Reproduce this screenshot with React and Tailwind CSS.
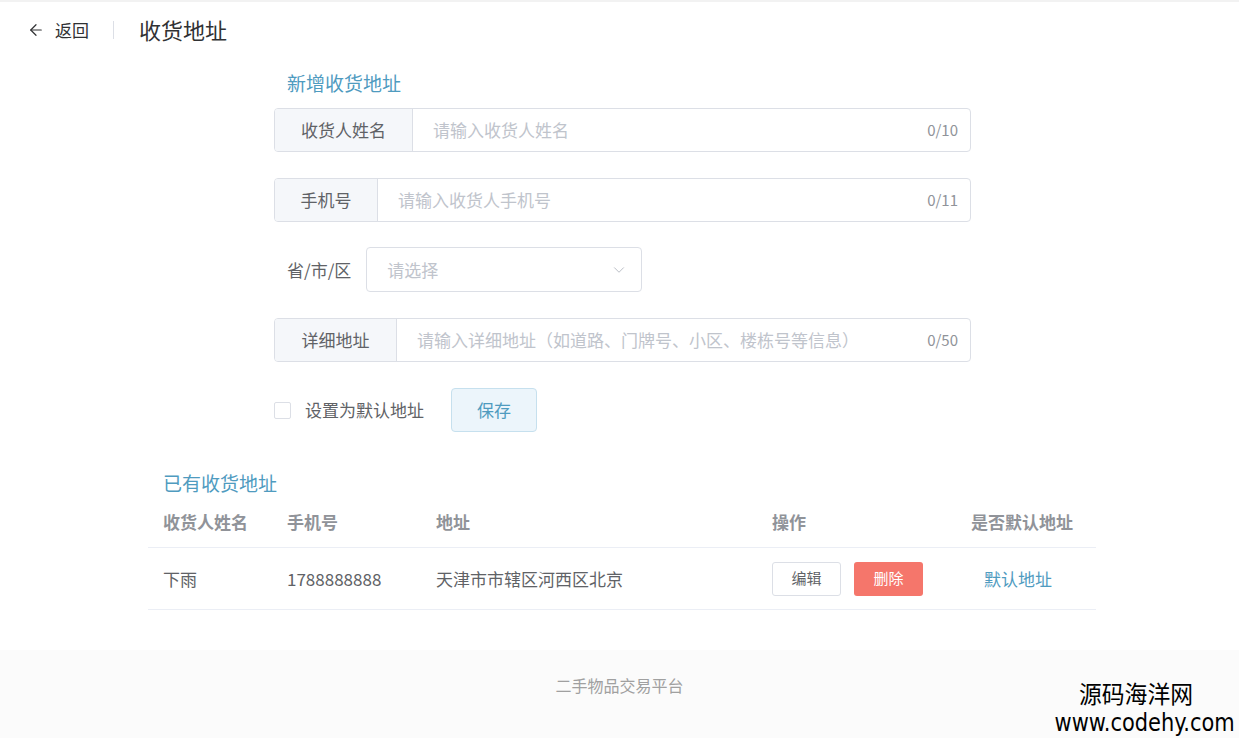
import React from "react";
import { ArrowLeft, ChevronDown } from "lucide-react";

const F = { fontFamily: '"Noto Sans CJK SC", "Noto Sans", sans-serif' };

function InputRow({ label, placeholder, count, labelW }) {
  return (
    <div className="flex h-[44px] w-[697px] border border-[#dcdfe6] rounded-[4px] overflow-hidden">
      <div
        className={`flex items-center justify-center bg-[#f5f7fa] border-r border-[#dcdfe6] text-[17px] text-[#606266] ${labelW}`}
      >
        {label}
      </div>
      <div className="flex-1 flex items-center justify-between pl-[20px] pr-[12px]">
        <span className="text-[17px] text-[#c0c4cc]">{placeholder}</span>
        <span className="text-[15px] text-[#909399]">{count}</span>
      </div>
    </div>
  );
}

export default function App() {
  return (
    <div className="relative w-[1239px] h-[738px] bg-white overflow-hidden" style={F}>
      {/* header */}
      <div className="h-[60px] flex items-center border-t-[2px] border-[#f2f2f2] pb-[3px]">
        <div className="flex items-center ml-[27px] text-[#303133]">
          <ArrowLeft size={18} strokeWidth={1.6} />
          <span className="ml-[10px] text-[17px]">返回</span>
        </div>
        <div className="ml-[24px] w-px h-[18px] bg-[#dcdfe6]" />
        <div className="ml-[25px] text-[22px] text-[#303133]">收货地址</div>
      </div>

      {/* form */}
      <div className="ml-[274px] flex flex-col">
        <div className="mt-[11px] ml-[13px] text-[19px] leading-[24px] text-[#4f9bbf]">新增收货地址</div>
        <div className="mt-[13px]">
          <InputRow label="收货人姓名" placeholder="请输入收货人姓名" count="0/10" labelW="w-[138px]" />
        </div>
        <div className="mt-[26px]">
          <InputRow label="手机号" placeholder="请输入收货人手机号" count="0/11" labelW="w-[103px]" />
        </div>
        <div className="mt-[25px] flex items-center">
          <span className="ml-[13px] text-[17px] text-[#606266]">省/市/区</span>
          <div className="ml-[15px] w-[276px] h-[45px] border border-[#dcdfe6] rounded-[4px] flex items-center justify-between pl-[20px] pr-[13px]">
            <span className="text-[17px] text-[#c0c4cc]">请选择</span>
            <ChevronDown size={18} strokeWidth={1.3} className="text-[#b8bcc4]" />
          </div>
        </div>
        <div className="mt-[26px]">
          <InputRow
            label="详细地址"
            placeholder="请输入详细地址（如道路、门牌号、小区、楼栋号等信息）"
            count="0/50"
            labelW="w-[122px]"
          />
        </div>
        <div className="mt-[26px] flex items-center">
          <div className="w-[17px] h-[17px] border border-[#dcdfe6] rounded-[2px] bg-white" />
          <span className="ml-[14px] text-[17px] text-[#606266]">设置为默认地址</span>
          <button className="ml-[27px] w-[86px] h-[44px] rounded-[4px] bg-[#ecf5fb] border border-[#c6e0ee] text-[17px] text-[#4f9bbf]">
            保存
          </button>
        </div>
      </div>

      {/* table */}
      <div className="ml-[148px] w-[948px] mt-[38px]">
        <div className="ml-[15px] text-[19px] leading-[26px] text-[#4f9bbf]">已有收货地址</div>
        <div className="flex h-[52px] items-center border-b border-[#ebeef5] text-[17px] font-bold text-[#909399]">
          <div className="w-[124px] pl-[15px]">收货人姓名</div>
          <div className="w-[149px] pl-[15px]">手机号</div>
          <div className="w-[336px] pl-[15px]">地址</div>
          <div className="w-[199px] pl-[15px]">操作</div>
          <div className="w-[140px] pl-[15px]">是否默认地址</div>
        </div>
        <div className="flex h-[62px] items-center border-b border-[#ebeef5] text-[17px] text-[#606266]">
          <div className="w-[124px] pl-[15px]">下雨</div>
          <div className="w-[149px] pl-[15px]">1788888888</div>
          <div className="w-[336px] pl-[15px]">天津市市辖区河西区北京</div>
          <div className="w-[199px] pl-[15px] flex gap-[13px]">
            <button className="w-[69px] h-[34px] rounded-[3px] border border-[#dcdfe6] bg-white text-[15px] text-[#606266]">
              编辑
            </button>
            <button className="w-[69px] h-[34px] rounded-[3px] bg-[#f5766b] text-[15px] text-white">
              删除
            </button>
          </div>
          <div className="w-[140px] pl-[28px] text-[#4f9bbf]">默认地址</div>
        </div>
      </div>

      {/* footer */}
      <div className="absolute left-0 right-0 bottom-0 h-[88px] bg-[#fbfbfb] flex items-start justify-center pt-[23px]">
        <span className="text-[16px] text-[#a0a0a0]">二手物品交易平台</span>
      </div>

      {/* watermark */}
      <div className="absolute right-[4px] bottom-[3px] flex flex-col items-end gap-[5px] text-black">
        <span className="mr-[42px] text-[24px] leading-[27px] scale-x-[0.95] origin-right">源码海洋网</span>
        <span
          className="text-[24px] leading-[24px] scale-x-[0.97] origin-right"
          style={{ fontFamily: '"DejaVu Sans Condensed", "Liberation Sans", sans-serif' }}
        >
          www.codehy.com
        </span>
      </div>
    </div>
  );
}
